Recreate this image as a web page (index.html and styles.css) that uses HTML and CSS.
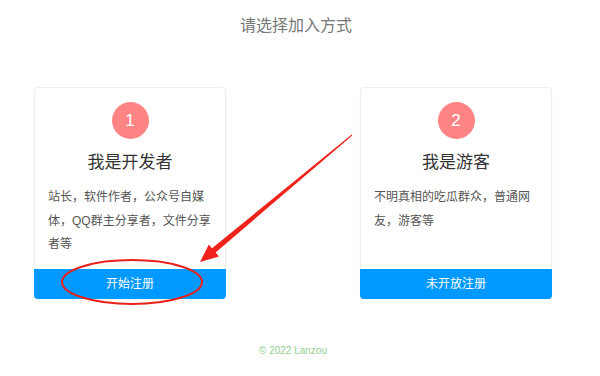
FILE: index.html
```html
<!DOCTYPE html>
<html lang="zh">
<head>
  <meta charset="UTF-8">
  <title>请选择加入方式</title>
  <link rel="stylesheet" href="styles.css">
</head>
<body>

<h1 class="page-title">请选择加入方式</h1>

<div class="cards">
  <div class="card">
    <div class="num">1</div>
    <h2>我是开发者</h2>
    <p>站长，软件作者，公众号自媒体，QQ群主分享者，文件分享者等</p>
    <a class="btn" href="#">开始注册</a>
  </div>
  <div class="card">
    <div class="num">2</div>
    <h2>我是游客</h2>
    <p>不明真相的吃瓜群众，普通网友，游客等</p>
    <a class="btn" href="#">未开放注册</a>
  </div>
</div>

<footer>© 2022 Lanzou</footer>

<!-- 标注：红色箭头和圆圈 -->
<svg class="mark" width="600" height="376" viewBox="0 0 600 376">
  <ellipse cx="132" cy="282" rx="70" ry="22" fill="none" stroke="#e8201a" stroke-width="2"/>
  <polygon fill="#f0231c" points="352.3,135.4 215.6,252.5 219,256.5 200,262 208.8,244.5 212,248.3 351.7,134.6"/>
</svg>

</body>
</html>
```

FILE: styles.css
```css
body {
  margin: 0;
  font-family: "Liberation Sans", "Noto Sans CJK SC", sans-serif;
  background: #fff;
  width: 600px;
  height: 376px;
  position: relative;
  overflow: hidden;
}
.page-title {
  margin: 0;
  padding-top: 15px;
  text-align: center;
  font-size: 16px;
  font-weight: normal;
  color: #777;
  line-height: 22px;
  padding-right: 8px;
}
.cards {
  display: flex;
  gap: 134px;
  padding-left: 34px;
  margin-top: 50px;
}
.card {
  width: 192px;
  height: 212px;
  box-sizing: border-box;
  border: 1px solid #eee;
  border-radius: 4px;
  box-shadow: 0 1px 3px rgba(0, 0, 0, 0.04);
  display: flex;
  flex-direction: column;
  align-items: center;
}
.num {
  width: 37px;
  height: 37px;
  border-radius: 50%;
  background: #ff8585;
  color: #fff;
  font-size: 17px;
  line-height: 37px;
  text-align: center;
  margin-top: 14px;
}
.card h2 {
  margin: 12px 0 0;
  font-size: 17px;
  font-weight: normal;
  color: #333;
  line-height: 24px;
}
.card p {
  margin: 11px 0 0;
  padding: 0 12px 0 13px;
  font-size: 12px;
  line-height: 23.5px;
  color: #555;
  align-self: stretch;
}
.btn {
  margin-top: auto;
  align-self: stretch;
  margin-left: -1px;
  margin-right: -1px;
  margin-bottom: -1px;
  height: 30px;
  line-height: 30px;
  background: #0099ff;
  color: #fff;
  text-align: center;
  font-size: 12px;
  text-decoration: none;
  border-radius: 0 0 4px 4px;
}
footer {
  text-align: center;
  margin-top: 46px;
  font-size: 10px;
  color: #92d092;
  padding-right: 14px;
}
.mark {
  position: absolute;
  top: 0;
  left: 0;
  pointer-events: none;
}
```
